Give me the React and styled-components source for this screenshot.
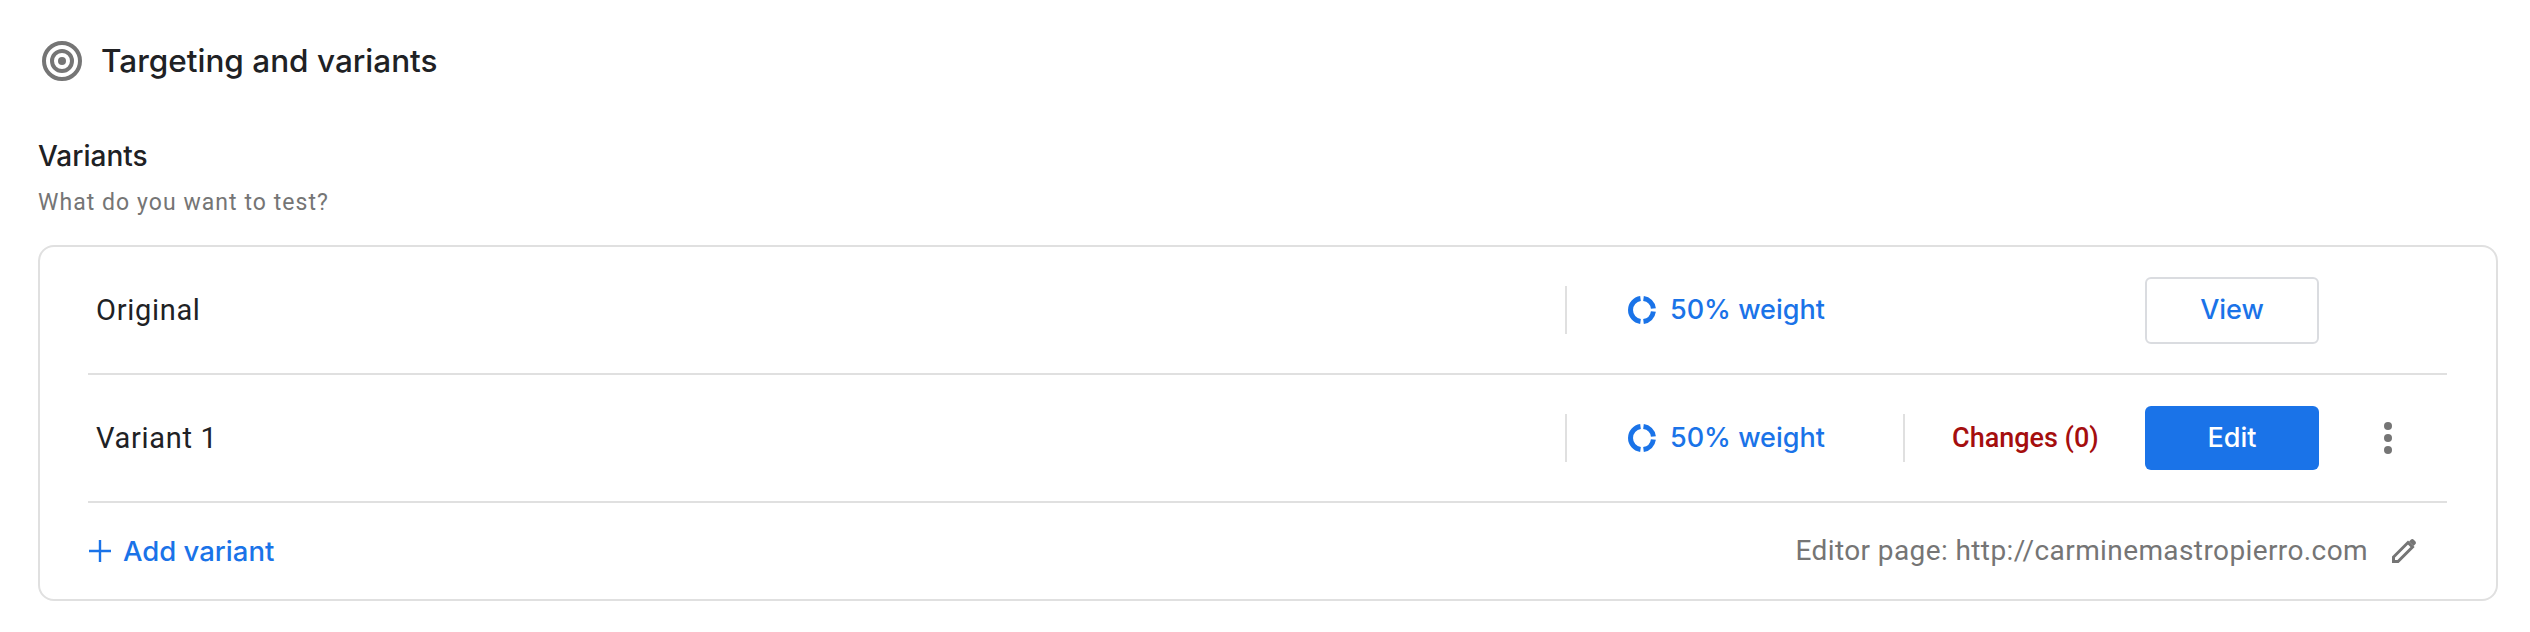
import React from "react";
import styled, { createGlobalStyle } from "styled-components";

const Global = createGlobalStyle`
  html, body { margin: 0; padding: 0; background: #fff; }
  body { font-family: Roboto, "Liberation Sans", sans-serif; }
`;

const Page = styled.div`
  width: 2530px;
  height: 632px;
  overflow: hidden;
  padding: 41px 32px 0 38px;
  box-sizing: border-box;
`;

const Header = styled.div`
  display: flex;
  align-items: center;
  gap: 19px;
  height: 40px;
  padding-left: 4px;
`;

const Title = styled.h2`
  margin: 0;
  font: 500 31.5px/40px Inter, sans-serif;
  color: #202124;
`;

const SectionTitle = styled.h3`
  margin: 59px 0 0;
  font: 500 28px/32px Inter, sans-serif;
  color: #202124;
`;

const SectionHint = styled.p`
  margin: 17px 0 0;
  font: 400 23px/28px Roboto, sans-serif;
  letter-spacing: 1.05px;
  color: #757575;
`;

const Card = styled.div`
  margin-top: 28px;
  width: 2460px;
  height: 356px;
  box-sizing: border-box;
  border: 2px solid #e0e0e0;
  border-radius: 16px;
  padding: 0 49px 0 48px;
`;

const Row = styled.div`
  display: grid;
  grid-template-columns: 1477px 2px 336px 2px 240px 174px 1fr;
  align-items: center;
  height: 126px;
  border-bottom: 2px solid #e0e0e0;
`;

const RowName = styled.div`
  padding-left: 8px;
  font: 400 29px/32px Roboto, sans-serif;
  letter-spacing: 0.7px;
  color: #202124;
`;

const Rule = styled.div`
  width: 2px;
  height: 48px;
  background: #e0e0e0;
`;

const Weight = styled.div`
  display: flex;
  align-items: center;
  gap: 14px;
  padding-left: 61px;
  font: 500 27px/32px Inter, sans-serif;
  color: #1a73e8;
`;

const Changes = styled.div`
  padding-left: 47px;
  font: 500 27px/32px Roboto, sans-serif;
  color: #a50e0e;
`;

const Button = styled.button`
  width: 174px;
  height: ${(p) => (p.$primary ? "64px" : "67px")};
  box-sizing: border-box;
  border: ${(p) => (p.$primary ? "none" : "2px solid #dadce0")};
  border-radius: 6px;
  background: ${(p) => (p.$primary ? "#1a73e8" : "#fff")};
  color: ${(p) => (p.$primary ? "#fff" : "#1a73e8")};
  font: 500 27px/32px Inter, sans-serif;
  padding: 0;
`;

const Kebab = styled.div`
  display: flex;
  padding-left: 64px;
`;

const Footer = styled.div`
  display: flex;
  align-items: center;
  justify-content: space-between;
  height: 96px;
`;

const AddVariant = styled.div`
  display: flex;
  align-items: center;
  gap: 12px;
  padding-left: 1px;
  font: 500 27.5px/32px Inter, sans-serif;
  color: #1a73e8;
`;

const EditorPage = styled.div`
  display: flex;
  align-items: center;
  gap: 23px;
  padding-right: 30px;
  font: 400 28px/32px Roboto, sans-serif;
  letter-spacing: 0.4px;
  color: #757575;
`;

const TargetIcon = () => (
  <svg width="40" height="40" viewBox="0 0 40 40" fill="none">
    <circle cx="20" cy="20" r="18" stroke="#757575" strokeWidth="4" />
    <circle cx="20" cy="20" r="10" stroke="#757575" strokeWidth="4" />
    <circle cx="20" cy="20" r="4" fill="#757575" />
  </svg>
);

const WeightIcon = () => (
  <svg width="28" height="28" viewBox="0 0 28 28" fill="none" stroke="#1a73e8" strokeWidth="5">
    <path d="M12.5 2.6A11.5 11.5 0 0 0 12.5 25.4" />
    <path d="M15.5 2.6A11.5 11.5 0 0 1 25.4 12.5" />
    <path d="M25.4 15.5A11.5 11.5 0 0 1 15.5 25.4" />
  </svg>
);

const KebabIcon = () => (
  <svg width="10" height="32" viewBox="0 0 10 32" fill="#757575">
    <circle cx="5" cy="4" r="4" />
    <circle cx="5" cy="16" r="4" />
    <circle cx="5" cy="28" r="4" />
  </svg>
);

const PlusIcon = () => (
  <svg width="22" height="22" viewBox="0 0 22 22" stroke="#1a73e8" strokeWidth="2.4">
    <path d="M11 0V22M0 11H22" />
  </svg>
);

const PencilIcon = () => (
  <svg width="26" height="26" viewBox="0 0 26 26" fill="none" stroke="#757575" strokeWidth="3">
    <path d="M2.5 23.5V19L17 4.5L21.5 9L7 23.5Z" />
    <path d="M18 3.5L20 1.5Q21.5 0.5 23 2L24.5 3.5Q25.5 5 24.5 6L22.5 8Z" fill="#757575" stroke="none" />
  </svg>
);

export default function App() {
  return (
    <Page>
      <Global />
      <Header>
        <TargetIcon />
        <Title>Targeting and variants</Title>
      </Header>
      <SectionTitle>Variants</SectionTitle>
      <SectionHint>What do you want to test?</SectionHint>
      <Card>
        <Row>
          <RowName>Original</RowName>
          <Rule />
          <Weight>
            <WeightIcon />
            50% weight
          </Weight>
          <span />
          <span />
          <Button>View</Button>
        </Row>
        <Row>
          <RowName>Variant 1</RowName>
          <Rule />
          <Weight>
            <WeightIcon />
            50% weight
          </Weight>
          <Rule />
          <Changes>Changes (0)</Changes>
          <Button $primary>Edit</Button>
          <Kebab>
            <KebabIcon />
          </Kebab>
        </Row>
        <Footer>
          <AddVariant>
            <PlusIcon />
            Add variant
          </AddVariant>
          <EditorPage>
            Editor page: http://carminemastropierro.com
            <PencilIcon />
          </EditorPage>
        </Footer>
      </Card>
    </Page>
  );
}
